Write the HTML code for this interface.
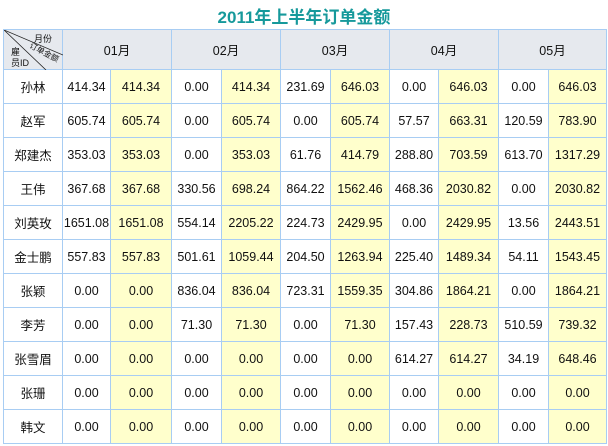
<!DOCTYPE html>
<html><head><meta charset="utf-8"><style>
*{margin:0;padding:0;box-sizing:border-box}
body{width:608px;height:446px;background:#fff;font-family:"Liberation Sans","Noto Sans CJK SC",sans-serif;position:relative;overflow:hidden}
h1{position:absolute;top:3px;left:0;width:608px;text-align:center;font-size:17px;font-weight:bold;color:#16999b;letter-spacing:0}
table{position:absolute;left:3px;top:29px;border-collapse:collapse;table-layout:fixed;width:603px}
td{border:1px solid #a8cdf3;text-align:center;font-size:12.5px;color:#111;height:34px;padding:0}
tr.h td{height:40px;background:#e6e9ee;font-size:12.5px}
td.y{background:#ffffcc}
td.c{position:relative;font-size:10px}
td.c span{white-space:nowrap;display:block}
</style></head><body>
<h1>2011年上半年订单金额</h1>
<table>
<colgroup><col style="width:59px"><col style="width:48px"><col style="width:61px"><col style="width:50px"><col style="width:59px"><col style="width:50px"><col style="width:59px"><col style="width:49px"><col style="width:60px"><col style="width:50px"><col style="width:58px"></colgroup>
<tr class="h"><td class="c"><svg width="59" height="40" style="position:absolute;left:0;top:0"><line x1="0" y1="0" x2="59" y2="25" stroke="#222" stroke-width="0.8"/><line x1="0" y1="0" x2="42" y2="40" stroke="#222" stroke-width="0.8"/></svg><span style="position:absolute;left:30px;top:2px;font-size:9px">月份</span><span style="position:absolute;left:24px;top:17px;font-size:8px;transform:rotate(28deg)">订单金额</span><span style="position:absolute;left:7px;top:17px;font-size:9px;line-height:11px;text-align:left">雇<br>员ID</span></td><td colspan="2">01月</td><td colspan="2">02月</td><td colspan="2">03月</td><td colspan="2">04月</td><td colspan="2">05月</td></tr>
<tr><td>孙林</td><td>414.34</td><td class="y">414.34</td><td>0.00</td><td class="y">414.34</td><td>231.69</td><td class="y">646.03</td><td>0.00</td><td class="y">646.03</td><td>0.00</td><td class="y">646.03</td></tr>
<tr><td>赵军</td><td>605.74</td><td class="y">605.74</td><td>0.00</td><td class="y">605.74</td><td>0.00</td><td class="y">605.74</td><td>57.57</td><td class="y">663.31</td><td>120.59</td><td class="y">783.90</td></tr>
<tr><td>郑建杰</td><td>353.03</td><td class="y">353.03</td><td>0.00</td><td class="y">353.03</td><td>61.76</td><td class="y">414.79</td><td>288.80</td><td class="y">703.59</td><td>613.70</td><td class="y">1317.29</td></tr>
<tr><td>王伟</td><td>367.68</td><td class="y">367.68</td><td>330.56</td><td class="y">698.24</td><td>864.22</td><td class="y">1562.46</td><td>468.36</td><td class="y">2030.82</td><td>0.00</td><td class="y">2030.82</td></tr>
<tr><td>刘英玫</td><td>1651.08</td><td class="y">1651.08</td><td>554.14</td><td class="y">2205.22</td><td>224.73</td><td class="y">2429.95</td><td>0.00</td><td class="y">2429.95</td><td>13.56</td><td class="y">2443.51</td></tr>
<tr><td>金士鹏</td><td>557.83</td><td class="y">557.83</td><td>501.61</td><td class="y">1059.44</td><td>204.50</td><td class="y">1263.94</td><td>225.40</td><td class="y">1489.34</td><td>54.11</td><td class="y">1543.45</td></tr>
<tr><td>张颖</td><td>0.00</td><td class="y">0.00</td><td>836.04</td><td class="y">836.04</td><td>723.31</td><td class="y">1559.35</td><td>304.86</td><td class="y">1864.21</td><td>0.00</td><td class="y">1864.21</td></tr>
<tr><td>李芳</td><td>0.00</td><td class="y">0.00</td><td>71.30</td><td class="y">71.30</td><td>0.00</td><td class="y">71.30</td><td>157.43</td><td class="y">228.73</td><td>510.59</td><td class="y">739.32</td></tr>
<tr><td>张雪眉</td><td>0.00</td><td class="y">0.00</td><td>0.00</td><td class="y">0.00</td><td>0.00</td><td class="y">0.00</td><td>614.27</td><td class="y">614.27</td><td>34.19</td><td class="y">648.46</td></tr>
<tr><td>张珊</td><td>0.00</td><td class="y">0.00</td><td>0.00</td><td class="y">0.00</td><td>0.00</td><td class="y">0.00</td><td>0.00</td><td class="y">0.00</td><td>0.00</td><td class="y">0.00</td></tr>
<tr><td>韩文</td><td>0.00</td><td class="y">0.00</td><td>0.00</td><td class="y">0.00</td><td>0.00</td><td class="y">0.00</td><td>0.00</td><td class="y">0.00</td><td>0.00</td><td class="y">0.00</td></tr>
</table>
</body></html>
